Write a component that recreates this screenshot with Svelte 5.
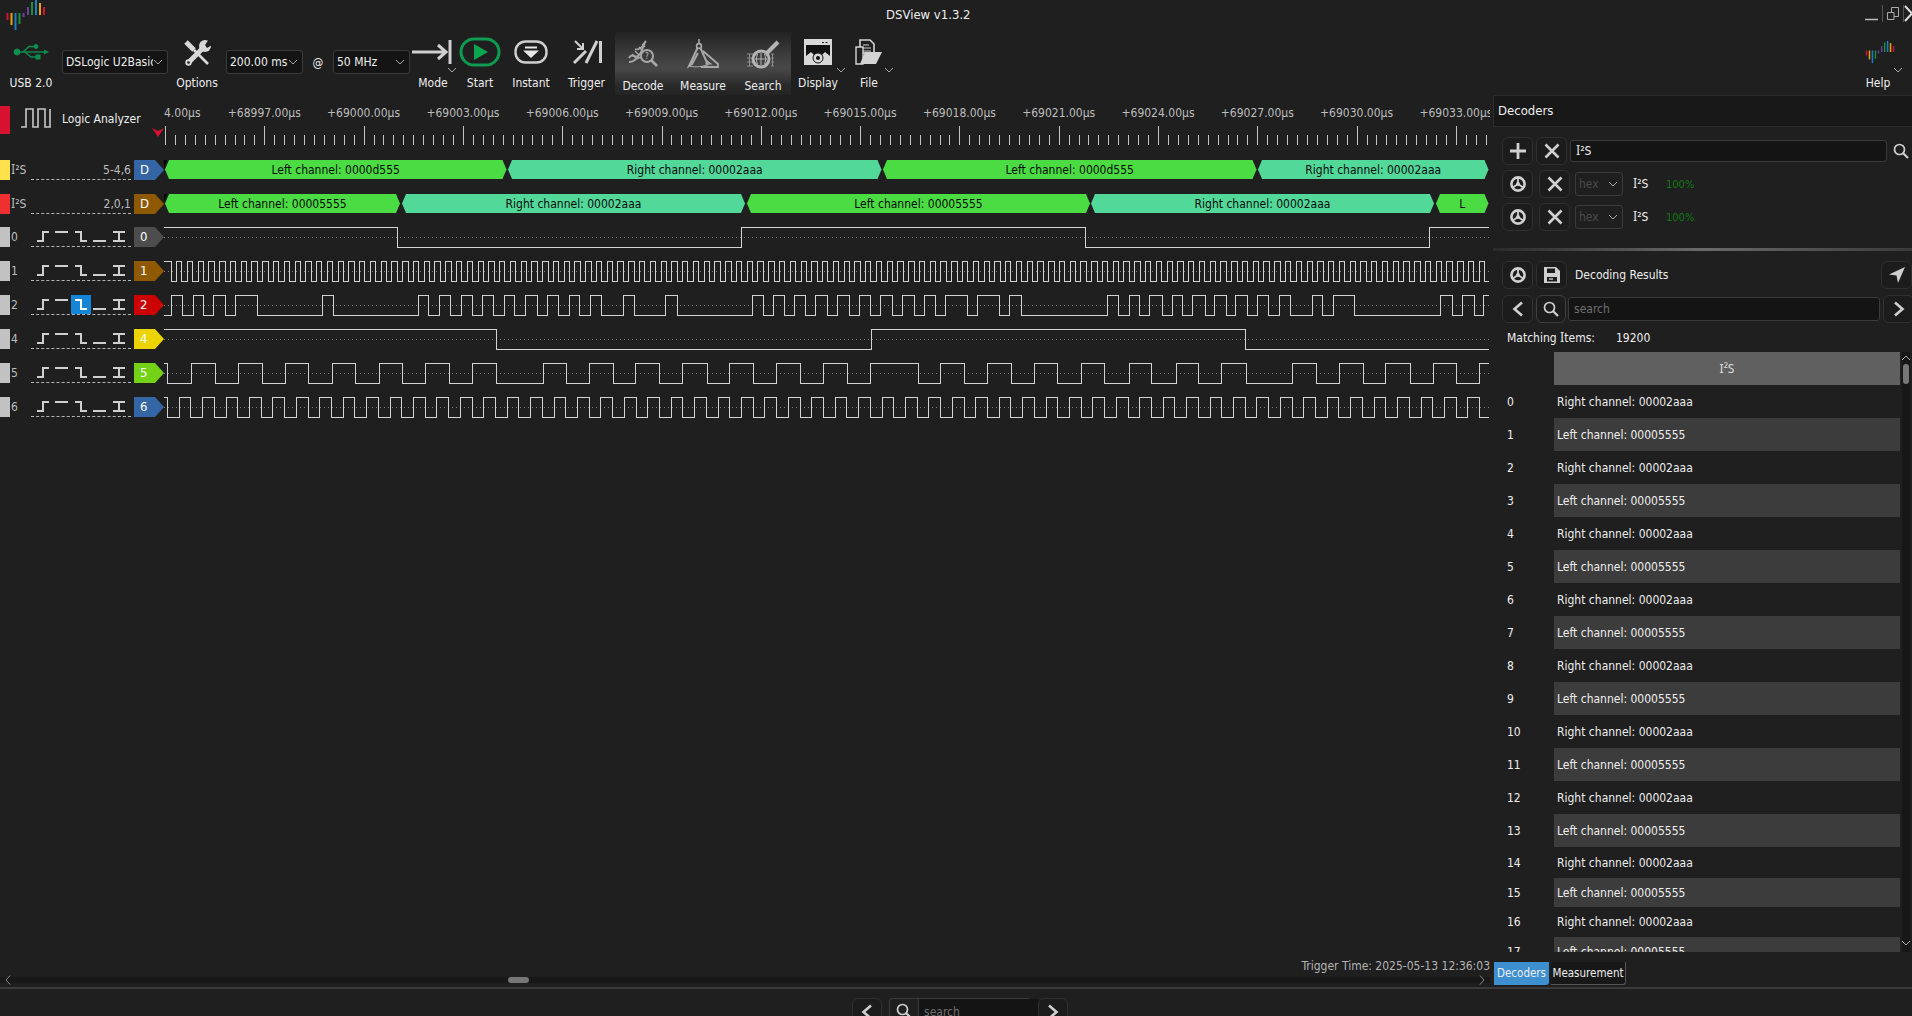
<script>
  const X0 = 164, X1 = 1489;

  // ruler
  const labels = [];
  for (let i = 1; i <= 13; i++) labels.push({ x: 165 + i * 99.3, t: `+${68994 + i * 3}.00µs` });
  let majorTicks = "", minorTicks = "";
  for (let i = 0; i <= 13; i++) {
    const mx = Math.round(165 + i * 99.3) + 0.5;
    majorTicks += `M${mx} 126V145`;
    for (let j = 1; j < 10; j++) {
      const x = Math.round(165 + i * 99.3 + j * 9.93) + 0.5;
      if (x < X1) minorTicks += `M${x} 135V145`;
    }
  }

  // decoder bars
  const decoded = [
    { y: 160, segs: [[165, 506.5, "L", "Left channel: 0000d555"], [508, 881.5, "R", "Right channel: 00002aaa"], [883, 1256.5, "L", "Left channel: 0000d555"], [1258, 1488.5, "R", "Right channel: 00002aaa"]] },
    { y: 194, segs: [[165, 400, "L", "Left channel: 00005555"], [402, 745, "R", "Right channel: 00002aaa"], [747, 1090, "L", "Left channel: 00005555"], [1091, 1434, "R", "Right channel: 00002aaa"], [1436, 1488.5, "L", "L"]] },
  ];
  function barPoints(a, b, y) {
    const h = 19, m = y + h / 2;
    return `${a},${m} ${a + 4},${y} ${b - 4},${y} ${b},${m} ${b - 4},${y + h} ${a + 4},${y + h}`;
  }

  // waveforms, x of every transition
  function series(start, step, end) {
    const out = [];
    for (let x = start; x < end; x += step) out.push(x);
    return out;
  }
  const waves = [
    { high: true, edges: [397, 741, 1085, 1429] },
    { high: true, edges: series(170.7, 5.383, X1) },
    { high: false, edges: [171, 182, 193, 203, 213, 225, 235, 257, 322, 333, 418, 428, 439, 450, 461, 472, 482, 493, 504, 514, 525, 537, 547, 558, 569, 579, 590, 601, 623, 634, 665, 677, 752, 763, 773, 784, 794, 805, 815, 827, 837, 849, 859, 870, 880, 892, 902, 914, 924, 935, 945, 967, 977, 999, 1009, 1021, 1107, 1118, 1129, 1139, 1149, 1162, 1172, 1182, 1192, 1205, 1214, 1226, 1235, 1247, 1257, 1268, 1279, 1290, 1312, 1322, 1333, 1354, 1440, 1452, 1462, 1474, 1483] },
    { high: true, edges: [496, 871, 1245] },
    { high: true, edges: [167, 191, 215, 238, 262, 285, 308, 332, 355, 379, 402, 425, 449, 472, 496, 543, 566, 589, 613, 635, 659, 682, 707, 729, 753, 776, 800, 823, 847, 870, 918, 940, 964, 987, 1011, 1034, 1057, 1081, 1104, 1129, 1151, 1176, 1198, 1221, 1246, 1292, 1316, 1339, 1363, 1385, 1410, 1433, 1456, 1479] },
    { high: true, edges: series(167, 11.715, X1) },
  ];
  function wavePath(w, i) {
    const top = 227.5 + i * 34, low = top + 20;
    let level = w.high;
    let d = `M${X0} ${level ? top : low}`;
    for (const e of w.edges) {
      level = !level;
      d += `H${Math.round(e) + 0.5}V${level ? top : low}`;
    }
    return d + `H${X1}`;
  }

  const channels = [
    { id: "0", tag: "#4d4d4d" },
    { id: "1", tag: "#8f5902" },
    { id: "2", tag: "#cc0000", sel: true },
    { id: "4", tag: "#edd400" },
    { id: "5", tag: "#73d216" },
    { id: "6", tag: "#3465a4" },
  ];
  const triggers = ["M1 10H7V1H13", "M0 1H13", "M1 1H7V10H13", "M0 10H13", "M1 1H13M1 10H13M7 1V10"];

  const results = [];
  const rowHeights = [33, 33, 33, 33, 33, 33, 33, 33, 33, 33, 33, 33, 33, 33, 31, 29, 30, 30];
  rowHeights.forEach((h, i) => results.push({ i, h, text: i % 2 ? "Left channel: 00005555" : "Right channel: 00002aaa" }));
</script>

{#snippet logo(w, h)}
  <svg class="logo" width={w} height={h} viewBox="0 0 46 30">
    <path d="M7.5 13v7" stroke="#d7112f" />
    <path d="M11.5 13v12" stroke="#e8a317" />
    <path d="M15.5 13v17" stroke="#1c7fc4" />
    <path d="M19.5 13v11" stroke="#1f8f3a" />
    <path d="M23.5 13v4" stroke="#6a3fa0" />
    <path d="M28 7v8" stroke="#6a3fa0" />
    <path d="M32 2v13" stroke="#1f8f3a" />
    <path d="M36 0v15" stroke="#1c7fc4" />
    <path d="M40 3v12" stroke="#e8a317" />
    <path d="M44 7v8" stroke="#d7112f" />
  </svg>
{/snippet}

{#snippet chev(dir)}
  <svg class="chev" width="10" height="6" viewBox="0 0 10 6"><path d={dir === "up" ? "M1 5L5 1L9 5" : "M1 1L5 5L9 1"} /></svg>
{/snippet}

{#snippet combo(text, width)}
  <div class="combo" style="width:{width}px"><span>{text}</span>{@render chev("down")}</div>
{/snippet}

{#snippet wheel()}
  <svg width="18" height="18" viewBox="0 0 18 18" class="glyph">
    <circle cx="9" cy="9" r="6.6" fill="none" stroke-width="2.6" />
    <circle cx="9" cy="9" r="2" class="solid" />
    <path d="M9 9V3M9 9L3.8 12.4M9 9L14.2 12.4" stroke-width="1.8" />
  </svg>
{/snippet}

{#snippet cross()}
  <svg width="16" height="16" viewBox="0 0 16 16" class="glyph"><path d="M1.5 1.5L14.5 14.5M14.5 1.5L1.5 14.5" stroke-width="2.6" /></svg>
{/snippet}

{#snippet lens(size)}
  <svg width={size} height={size} viewBox="0 0 16 16" class="glyph"><circle cx="6.5" cy="6.5" r="5" fill="none" stroke-width="1.7" /><path d="M10 10L15 15" stroke-width="2.2" /></svg>
{/snippet}

{#snippet arrow(dir)}
  <svg width="12" height="16" viewBox="0 0 12 16" class="glyph"><path d={dir === "left" ? "M10 1.5L2.5 8L10 14.5" : "M2 1.5L9.5 8L2 14.5"} stroke-width="2.6" /></svg>
{/snippet}

{#snippet i2s()}<span class="serif-i">I</span>²S{/snippet}

<div class="app">
  <header class="title">
    {@render logo(46, 30)}
    <span class="title-text">DSView v1.3.2</span>
    <div class="winctl">
      <svg width="47" height="22" viewBox="0 0 47 22">
        <path d="M0 14.5H13" stroke="#bbb" stroke-width="1.5" />
        <path d="M17.5 0V17M38.5 0V17" stroke="#555" />
        <path d="M26.5 7.5V2.5H33.5V11.5H29M22.5 7.5H29V14.5H22.5Z" stroke="#aaa" fill="none" />
        <path d="M40 1L47 8.5L40 16" stroke="#ddd" stroke-width="2" fill="none" />
      </svg>
    </div>
  </header>

  <section class="toolbar">
    <div class="tool w62">
      <div class="ic">
        <svg width="36" height="16" viewBox="0 0 36 16">
          <g fill="#0d8f4c" stroke="#0d8f4c">
            <circle cx="4" cy="8" r="3" />
            <path d="M4 8H31" stroke-width="1.4" />
            <path d="M36 8L31 5.5V10.5Z" stroke="none" />
            <path d="M10 8L16 2.5H21M12 8L18 13H23" fill="none" stroke-width="1.4" />
            <circle cx="23" cy="2.5" r="2" />
            <rect x="23" y="11" width="4" height="4" />
          </g>
        </svg>
      </div>
      <span>USB 2.0</span>
    </div>
    <div class="combo-slot">{@render combo("DSLogic U2Basic", 106)}</div>
    <div class="tool w58">
      <div class="ic">
        <svg width="32" height="32" viewBox="0 0 32 32">
          <path d="M5 6L13 14" stroke="#d8d8d8" stroke-width="5" />
          <path d="M13 14L27 28" stroke="#d8d8d8" stroke-width="2.6" />
          <path d="M22 12L8 26" stroke="#d8d8d8" stroke-width="5" />
          <circle cx="24" cy="10" r="6" fill="#d8d8d8" />
          <path d="M24 9L28 3L33 8L26 12Z" fill="#1f1f1f" />
          <circle cx="7.5" cy="26.5" r="3.2" fill="#d8d8d8" />
          <circle cx="7.5" cy="26.5" r="1.3" fill="#1f1f1f" />
        </svg>
      </div>
      <span>Options</span>
    </div>
    <div class="combo-slot">{@render combo("200.00 ms", 77)}</div>
    <div class="at">@</div>
    <div class="combo-slot">{@render combo("50 MHz", 77)}</div>
    <div class="tool w46">
      <div class="ic">
        <svg width="44" height="26" viewBox="0 0 44 26">
          <path d="M1 13H35M27 6L35 13L27 20" stroke="#d0d0d0" stroke-width="3" fill="none" />
          <path d="M39 1V25" stroke="#d0d0d0" stroke-width="3" />
        </svg>
      </div>
      <span>Mode</span>
      <i class="drop">{@render chev("down")}</i>
    </div>
    <div class="tool w48">
      <div class="ic">
        <svg width="42" height="30" viewBox="0 0 42 30">
          <rect x="2" y="2" width="38" height="26" rx="13" fill="none" stroke="#0c9c4f" stroke-width="3" />
          <path d="M15 7L29 15L15 23Z" fill="#0ca54f" />
        </svg>
      </div>
      <span>Start</span>
    </div>
    <div class="tool w54">
      <div class="ic">
        <svg width="34" height="24" viewBox="0 0 34 24">
          <rect x="1.5" y="1.5" width="31" height="21" rx="10" fill="none" stroke="#cfcfcf" stroke-width="2.4" />
          <path d="M11 7.5H23" stroke="#e8e8e8" stroke-width="2" />
          <path d="M9 10.5H25L17 18Z" fill="#e8e8e8" />
        </svg>
      </div>
      <span>Instant</span>
    </div>
    <div class="tool w57">
      <div class="ic">
        <svg width="30" height="26" viewBox="0 0 30 26">
          <path d="M2 24L14 12M14 24L25 2" stroke="#d0d0d0" stroke-width="3" />
          <path d="M28.5 2V24" stroke="#d0d0d0" stroke-width="3" />
          <path d="M3 2L11 10M5 10H11V4" stroke="#d0d0d0" stroke-width="2" fill="none" />
        </svg>
      </div>
      <span>Trigger</span>
    </div>

    <div class="tool-group">
      <div class="tool w56">
        <div class="ic">
          <svg width="32" height="30" viewBox="0 0 32 30">
            <g stroke="#a8a8a8" fill="none">
              <path d="M2 19C6 12 8 22 13 15S14 7 19 2" stroke-width="2" />
              <path d="M2 23C8 24 10 16 14 19" stroke-width="2" />
              <path d="M8 10C12 12 14 8 18 5M5 15L9 19M8 12L12 16M12 8L15 11M15 5L18 8" stroke-width="1.4" />
              <circle cx="20" cy="17" r="6" stroke-width="2" fill="#3a3a3a" />
              <path d="M24.5 21.5L30 27" stroke-width="2.6" />
            </g>
            <text x="20" y="20" class="q">?</text>
          </svg>
        </div>
        <span>Decode</span>
      </div>
      <div class="tool w64">
        <div class="ic">
          <svg width="32" height="30" viewBox="0 0 32 30">
            <g stroke="#a8a8a8" fill="none">
              <path d="M12 0V5" stroke-width="1.6" />
              <circle cx="12" cy="7" r="2.4" stroke-width="1.6" />
              <path d="M10.5 9L2 27L5 25L11 14M13.5 9L21 26" stroke-width="2" />
              <path d="M16 12L31 25V28H14" stroke-width="1.8" />
              <path d="M20 22L24 25H19Z" stroke-width="1.2" />
              <path d="M2 27C10 29 16 27 21 26" stroke-width="1" />
            </g>
          </svg>
        </div>
        <span>Measure</span>
      </div>
      <div class="tool w56">
        <div class="ic">
          <svg width="34" height="30" viewBox="0 0 34 30">
            <g stroke="#8c8c8c" fill="none" stroke-width="1">
              <path d="M1 15H7M1 19H7M1 23H7M1 27H7M25 15H28M25 19H28M25 23H28M25 27H28M3.5 15V27M26.5 15V27" />
            </g>
            <g stroke="#b4b4b4" fill="none">
              <circle cx="15" cy="20" r="8" stroke-width="3" />
              <path d="M21 14L32 3" stroke-width="4" />
              <path d="M9 20H21M15 14V26M11.5 15C10 19 10 22 11.5 25M18.5 15C20 19 20 22 18.5 25" stroke-width="1" />
            </g>
          </svg>
        </div>
        <span>Search</span>
      </div>
    </div>

    <div class="tool w54">
      <div class="ic">
        <svg width="28" height="26" viewBox="0 0 28 26">
          <rect x="1" y="1" width="26" height="24" fill="#111" stroke="#d8d8d8" stroke-width="2" />
          <rect x="1" y="1" width="26" height="5" fill="#d8d8d8" />
          <path d="M18 3.5H20M21.5 3.5H23.5" stroke="#222" />
          <path d="M2 24V17L7 13L11 17H17L21 13L26 17V24Z" fill="#d8d8d8" />
          <circle cx="14" cy="19" r="5" fill="#d8d8d8" stroke="#111" />
          <circle cx="14" cy="19" r="2" fill="#111" />
        </svg>
      </div>
      <span>Display</span>
      <i class="drop">{@render chev("down")}</i>
    </div>
    <div class="tool w48">
      <div class="ic">
        <svg width="28" height="26" viewBox="0 0 28 26">
          <path d="M5 1H15L19 5V14H5Z" fill="#1f1f1f" stroke="#d4d4d4" stroke-width="1.6" />
          <path d="M8 6H14M8 9H16M8 12H16" stroke="#d4d4d4" />
          <path d="M1 8V25H8V8Z" fill="#1f1f1f" stroke="#d4d4d4" stroke-width="1.4" />
          <path d="M5 25L10 13H27L21 25Z" fill="#d4d4d4" />
        </svg>
      </div>
      <span>File</span>
      <i class="drop">{@render chev("down")}</i>
    </div>

    <div class="spacer"></div>

    <div class="tool w68">
      <div class="ic">{@render logo(34, 24)}</div>
      <span>Help</span>
      <i class="drop help">{@render chev("down")}</i>
    </div>
  </section>

  <main class="main">
    <div class="left">
      <div class="workspace">
        <div class="headers">
          <div class="la-head">
            <div class="la-mark"></div>
            <svg class="la-wave" width="33" height="20" viewBox="0 0 33 20">
              <path d="M0 19H5V1H12V19H17V1H24V19H29V1" fill="none" stroke="#c8c8c8" stroke-width="1.6" transform="translate(1 0)" />
            </svg>
            <span>Logic Analyzer</span>
            <svg class="cursor" width="12" height="9" viewBox="0 0 12 9"><path d="M0 0L6 3L12 0L6 9Z" fill="#d7112f" /></svg>
          </div>

          <div class="row dec">
            <div class="swatch" style="background:#ffe14d"></div>
            <div class="name">{@render i2s()}</div>
            <div class="info">5-4,6</div>
            <div class="tag" style="background:#3465a4">D</div>
          </div>
          <div class="row dec">
            <div class="swatch" style="background:#f03030"></div>
            <div class="name">{@render i2s()}</div>
            <div class="info">2,0,1</div>
            <div class="tag" style="background:#8f5902">D</div>
          </div>

          {#each channels as ch}
            <div class="row">
              <div class="swatch" style="background:#c2c2c2"></div>
              <div class="name">{ch.id}</div>
              <div class="info trig">
                {#each triggers as t, n}
                  <span class="trig-btn" class:on={ch.sel && n === 2}>
                    <svg width="14" height="11" viewBox="0 0 14 11"><path d={t} /></svg>
                  </span>
                {/each}
              </div>
              <div class="tag" style="background:{ch.tag}">{ch.id}</div>
            </div>
          {/each}
        </div>

        <div class="viewport">
          <svg width="1326" height="882" viewBox="164 95 1326 882">
            <text x="164" y="117" class="ruler-text" text-anchor="start">4.00µs</text>
            {#each labels as l}
              <text x={l.x} y="117" class="ruler-text" text-anchor="middle">{l.t}</text>
            {/each}
            <path d={majorTicks} class="tick" />
            <path d={minorTicks} class="tick" />

            {#each decoded as row}
              <path d="M164 {row.y}L167 {row.y}L164 {row.y + 8}Z" fill="#000" />
              {#each row.segs as s}
                <polygon points={barPoints(s[0], s[1], row.y)} fill={s[2] === "L" ? "#4bdc44" : "#52d899"} />
                <text x={(s[0] + s[1]) / 2} y={row.y + 14} class="bar-text" text-anchor="middle">{s[3]}</text>
              {/each}
            {/each}

            {#each waves as w, i}
              <path d="M164 {237.5 + i * 34}H{X1}" class="mid" />
              <path d={wavePath(w, i)} class="wave" />
            {/each}
          </svg>
          <div class="trigger-time">Trigger Time: 2025-05-13 12:36:03</div>
        </div>
      </div>
      <div class="hscroll">
        <svg class="sb-arrow" width="6" height="10" viewBox="0 0 6 10"><path d="M5 0.5L1 5L5 9.5" /></svg>
        <div class="hthumb"></div>
        <svg class="sb-arrow end" width="6" height="10" viewBox="0 0 6 10"><path d="M1 0.5L5 5L1 9.5" /></svg>
      </div>
    </div>

    <aside class="dock">
      <div class="dock-title">Decoders</div>

      <div class="line first">
        <button class="ibtn">
          <svg width="16" height="16" viewBox="0 0 16 16" class="glyph"><path d="M8 0V16M0 8H16" stroke-width="2.8" /></svg>
        </button>
        <button class="ibtn">{@render cross()}</button>
        <div class="field wide"><span class="txt">{@render i2s()}</span></div>
        <span class="lens-side">{@render lens(16)}</span>
      </div>

      {#each [0, 1] as _}
        <div class="line dec-line">
          <button class="ibtn">{@render wheel()}</button>
          <button class="ibtn">{@render cross()}</button>
          <div class="combo hex"><span>hex</span>{@render chev("down")}</div>
          <span class="dec-name">{@render i2s()}</span>
          <span class="pct">100%</span>
        </div>
      {/each}

      <div class="sep"></div>

      <div class="line results">
        <button class="ibtn">{@render wheel()}</button>
        <button class="ibtn">
          <svg width="16" height="16" viewBox="0 0 16 16"><path fill-rule="evenodd" fill="#cfcfcf" d="M0 0H12L16 4V16H0ZM3 1.5V6H11V1.5ZM3 10V14.5H13V10Z" /><path d="M5 12H9" stroke="#cfcfcf" stroke-width="1.4" /></svg>
        </button>
        <span class="results-title">Decoding Results</span>
        <button class="ibtn nav">
          <svg width="16" height="16" viewBox="0 0 16 16"><path d="M16 0L0 7.5L7.5 8.5L9 16Z" fill="#cfcfcf" /></svg>
        </button>
      </div>

      <div class="line find">
        <button class="ibtn">{@render arrow("left")}</button>
        <button class="ibtn light">{@render lens(16)}</button>
        <input class="field grow" placeholder="search" />
        <button class="ibtn">{@render arrow("right")}</button>
      </div>

      <div class="matching"><span class="serif-wrap">Matching <span class="serif-i">I</span>tems:</span><span>19200</span></div>

      <div class="table-wrap">
        <div class="table">
          <div class="thead">I²S</div>
          {#each results as r}
            <div class="tr" style="height:{r.h}px">
              <span class="idx">{r.i}</span>
              <span class="cell" class:odd={r.i % 2 === 1}>{r.text}</span>
            </div>
          {/each}
        </div>
        <div class="vscroll">
          <span class="up">{@render chev("up")}</span>
          <div class="vthumb"></div>
          <span class="down">{@render chev("down")}</span>
        </div>
      </div>

      <div class="tabs">
        <div class="tab active">Decoders</div>
        <div class="tab">Measurement</div>
      </div>
    </aside>
  </main>

  <footer class="bottom">
    <button class="ibtn small">{@render arrow("left")}</button>
    <div class="bsearch">
      <span class="bs-icon">{@render lens(16)}</span>
      <input placeholder="search" />
    </div>
    <button class="ibtn small">{@render arrow("right")}</button>
  </footer>
</div>

<style>
  :global(body) {
    margin: 0;
    background: #1f1f1f;
    overflow: hidden;
  }
  .app {
    width: 1912px;
    height: 1016px;
    display: flex;
    flex-direction: column;
    overflow: hidden;
    background: #1f1f1f;
    color: #eeeeee;
    font-family: "DejaVu Sans Condensed", "DejaVu Sans", sans-serif;
    font-stretch: condensed;
    font-size: 12px;
  }
  .serif-i {
    font-family: "DejaVu Serif Condensed", "DejaVu Serif", serif;
  }

  /* title */
  .title {
    height: 30px;
    flex: none;
    display: flex;
    align-items: flex-start;
    position: relative;
  }
  .title-text {
    position: absolute;
    left: 886px;
    top: 7px;
    font-size: 13px;
  }
  .winctl {
    margin-left: auto;
    padding-top: 5px;
    line-height: 0;
  }
  .logo {
    display: block;
    stroke-width: 2;
    fill: none;
  }

  /* toolbar */
  .toolbar {
    height: 65px;
    flex: none;
    display: flex;
    align-items: flex-start;
  }
  .tool {
    position: relative;
    display: flex;
    flex-direction: column;
    align-items: center;
    flex: none;
  }
  .tool .ic {
    height: 44px;
    display: flex;
    align-items: center;
    justify-content: center;
  }
  .tool > span {
    line-height: 18px;
    color: #eeeeee;
  }
  .w46 { width: 46px; }
  .w48 { width: 48px; }
  .w54 { width: 54px; }
  .w56 { width: 56px; }
  .w57 { width: 57px; }
  .w58 { width: 58px; }
  .w62 { width: 62px; }
  .w64 { width: 64px; }
  .w68 { width: 68px; }
  .drop {
    position: absolute;
    right: -1px;
    top: 37px;
    line-height: 0;
  }
  .drop.help {
    right: 9px;
  }
  .chev {
    fill: none;
    stroke: #a8a8a8;
    stroke-width: 1;
    display: block;
  }
  .combo-slot {
    padding-top: 20px;
    flex: none;
  }
  .combo {
    height: 24px;
    box-sizing: border-box;
    display: flex;
    align-items: center;
    justify-content: space-between;
    background: #141414;
    border: 1px solid #3a3a3a;
    border-radius: 3px;
    padding: 0 4px 0 3px;
  }
  .combo span {
    overflow: hidden;
    white-space: nowrap;
    flex: 1;
  }
  .at {
    width: 30px;
    flex: none;
    padding-top: 26px;
    text-align: center;
  }
  .tool-group {
    display: flex;
    flex: none;
    height: 63px;
    margin-top: 2px;
    background: linear-gradient(#222222, #3c3c3c 35%, #484848 58%, #2a2a2a 85%, #232323);
  }
  .tool-group .tool .ic {
    height: 43px;
  }
  .tool-group .tool > span {
    padding-top: 2px;
  }
  .q {
    font-size: 8px;
    fill: #c8c8c8;
    text-anchor: middle;
  }
  .spacer {
    flex: 1;
  }

  /* main */
  .main {
    height: 892px;
    flex: none;
    display: flex;
  }
  .left {
    width: 1490px;
    flex: none;
    display: flex;
    flex-direction: column;
  }
  .workspace {
    height: 882px;
    flex: none;
    display: flex;
  }
  .headers {
    width: 164px;
    flex: none;
  }
  .la-head {
    position: relative;
    height: 58px;
    box-sizing: border-box;
    padding-top: 11px;
    display: flex;
    align-items: flex-start;
  }
  .la-mark {
    width: 10px;
    height: 28px;
    background: #d7112f;
    flex: none;
  }
  .la-wave {
    margin: 2px 9px 0 10px;
    flex: none;
  }
  .la-head span {
    line-height: 26px;
    white-space: nowrap;
  }
  .cursor {
    position: absolute;
    left: 152px;
    top: 33px;
  }
  .row {
    height: 34px;
    box-sizing: border-box;
    padding-top: 7px;
    display: flex;
    align-items: flex-start;
  }
  .row.dec + .row.dec {
    height: 33px;
  }
  .swatch {
    width: 10px;
    height: 20px;
    flex: none;
  }
  .name {
    width: 21px;
    padding-left: 1px;
    box-sizing: border-box;
    line-height: 20px;
    color: #bdbdbd;
    flex: none;
  }
  .info {
    width: 100px;
    height: 20px;
    box-sizing: border-box;
    border-bottom: 1px dashed #b4b4b4;
    text-align: right;
    line-height: 20px;
    color: #bdbdbd;
    flex: none;
  }
  .trig {
    display: flex;
    justify-content: space-between;
    padding: 0 3px;
    align-items: stretch;
  }
  .trig-btn {
    width: 20px;
    display: flex;
    align-items: center;
    justify-content: center;
    margin: 0 -0.5px;
    line-height: 0;
  }
  .trig-btn path {
    fill: none;
    stroke: #cfcfcf;
    stroke-width: 2;
  }
  .trig-btn.on {
    background: #1585d8;
  }
  .trig-btn.on path {
    stroke: #ffffff;
  }
  .tag {
    width: 30px;
    height: 20px;
    margin-left: 3px;
    box-sizing: border-box;
    padding-left: 6px;
    line-height: 20px;
    color: #ffffff;
    font-size: 13px;
    clip-path: polygon(0 0, 70% 0, 100% 50%, 70% 100%, 0 100%);
    flex: none;
  }
  .viewport {
    position: relative;
    width: 1326px;
    flex: none;
    line-height: 0;
  }
  .ruler-text {
    font-size: 12px;
    fill: #bdbdbd;
  }
  .tick {
    stroke: #c4c4c4;
    fill: none;
    shape-rendering: crispEdges;
  }
  .bar-text {
    font-size: 12px;
    fill: #0a0a0a;
  }
  .mid {
    stroke: #7c7c7c;
    stroke-dasharray: 1 3;
    fill: none;
    shape-rendering: crispEdges;
  }
  .wave {
    stroke: #d4d4d4;
    fill: none;
    shape-rendering: crispEdges;
  }
  .trigger-time {
    position: absolute;
    right: 0;
    bottom: 3px;
    line-height: 16px;
    color: #b4b4b4;
    white-space: nowrap;
  }
  .hscroll {
    position: relative;
    height: 6px;
    flex: none;
    background: #181818;
    display: flex;
    align-items: center;
    justify-content: space-between;
    padding: 0 5px;
    box-sizing: border-box;
  }
  .sb-arrow {
    fill: none;
    stroke: #8a8a8a;
    overflow: visible;
  }
  .sb-arrow.end {
    margin-right: 0;
  }
  .hthumb {
    position: absolute;
    left: 508px;
    top: 0;
    width: 21px;
    height: 6px;
    background: #777777;
    border-radius: 3px;
  }

  /* right dock */
  .dock {
    width: 419px;
    margin-left: 3px;
    flex: none;
    display: flex;
    flex-direction: column;
  }
  .dock-title {
    height: 32px;
    box-sizing: border-box;
    background: #181818;
    border: 1px solid #2c2c2c;
    border-right: none;
    padding-left: 4px;
    line-height: 29px;
    font-size: 13px;
    flex: none;
  }
  .line {
    height: 28px;
    padding-left: 9px;
    display: flex;
    align-items: center;
    flex: none;
  }
  .line.first {
    margin-top: 10px;
    gap: 3px;
  }
  .dec-line {
    margin-top: 5px;
  }
  .line.first + .dec-line {
    margin-top: 5px;
  }
  .ibtn {
    width: 31px;
    height: 28px;
    padding: 0;
    box-sizing: border-box;
    background: #1c1c1c;
    border: 1px solid #2f2f2f;
    border-radius: 6px;
    display: flex;
    align-items: center;
    justify-content: center;
    flex: none;
  }
  .ibtn.light {
    border-color: #3e3e3e;
    width: 30px;
  }
  .glyph {
    fill: none;
    stroke: #d0d0d0;
    display: block;
  }
  .glyph .solid {
    fill: #d0d0d0;
    stroke: none;
  }
  .field {
    height: 22px;
    box-sizing: border-box;
    background: #141414;
    border: 1px solid #3a3a3a;
    border-radius: 3px;
    padding: 0 5px;
    color: #eeeeee;
    font: inherit;
    font-stretch: condensed;
    outline: none;
    display: flex;
    align-items: center;
  }
  .field.wide {
    width: 317px;
    flex: none;
  }
  .field.grow {
    height: 24px;
    width: 311px;
    flex: none;
    margin: 0 2px;
  }
  .field::placeholder {
    color: #6f6f6f;
  }
  .lens-side {
    margin-left: 3px;
    line-height: 0;
  }
  .dec-line .ibtn + .ibtn {
    margin-left: 6px;
  }
  .combo.hex {
    width: 48px;
    margin-left: 5px;
    background: #1f1f1f;
    color: #4a4a4a;
    flex: none;
  }
  .dec-name {
    margin-left: 10px;
    width: 33px;
  }
  .pct {
    color: #0f7a0f;
    font-size: 11px;
  }
  .sep {
    height: 3px;
    margin-top: 17px;
    background: linear-gradient(90deg, #2a2a2a, #6a6a6a 50%, #3a3a3a);
    flex: none;
  }
  .line.results {
    margin-top: 10px;
    gap: 3px;
  }
  .results-title {
    margin-left: 5px;
  }
  .ibtn.nav {
    margin-left: auto;
  }
  .line.find {
    margin-top: 6px;
    gap: 3px;
  }
  .line.find .field.grow {
    margin: 0;
    width: 312px;
  }
  .line.find .ibtn.light {
    margin-right: -1px;
  }
  .matching {
    height: 29px;
    padding-left: 14px;
    display: flex;
    align-items: center;
    flex: none;
  }
  .serif-wrap {
    width: 109px;
  }
  .table-wrap {
    height: 600px;
    display: flex;
    overflow: hidden;
    flex: none;
  }
  .table {
    width: 407px;
    flex: none;
  }
  .thead {
    height: 33px;
    margin-left: 61px;
    background: #606060;
    display: flex;
    align-items: center;
    justify-content: center;
    font-family: "Noto Sans", sans-serif;
    font-stretch: normal;
    color: #dddddd;
  }
  .tr {
    display: flex;
    align-items: stretch;
  }
  .idx {
    width: 61px;
    padding-left: 14px;
    box-sizing: border-box;
    display: flex;
    align-items: center;
    flex: none;
  }
  .cell {
    flex: 1;
    padding-left: 3px;
    display: flex;
    align-items: center;
  }
  .cell.odd {
    background: #3c3c3c;
  }
  .vscroll {
    position: relative;
    width: 8px;
    margin-left: 2px;
    flex: none;
    background: #171717;
  }
  .vscroll .up {
    position: absolute;
    top: 3px;
    left: -1px;
  }
  .vscroll .down {
    position: absolute;
    bottom: 6px;
    left: -1px;
  }
  .vthumb {
    position: absolute;
    top: 12px;
    left: 1px;
    width: 6px;
    height: 20px;
    border-radius: 3px;
    background: #777777;
  }
  .tabs {
    margin-top: 10px;
    height: 23px;
    padding-left: 1px;
    display: flex;
    gap: 2px;
    flex: none;
  }
  .tab {
    width: 75px;
    box-sizing: border-box;
    border-right: 1px solid #555;
    border-bottom: 1px solid #555;
    border-bottom-right-radius: 3px;
    text-align: center;
    line-height: 22px;
    background: #181818;
    font-size: 11.5px;
  }
  .tab.active {
    width: 55px;
    background: #3d8fd0;
    border: none;
  }

  /* bottom */
  .bottom {
    flex: 1;
    border-top: 2px solid #3a3a3a;
    padding: 9px 0 0 8px;
    display: flex;
    justify-content: center;
    align-items: flex-start;
    gap: 7px;
    overflow: hidden;
  }
  .ibtn.small {
    width: 30px;
  }
  .bsearch {
    width: 142px;
    height: 28px;
    box-sizing: border-box;
    border: 1px solid #3a3a3a;
    border-radius: 3px;
    display: flex;
    flex: none;
  }
  .bs-icon {
    width: 29px;
    box-sizing: border-box;
    border-right: 1px solid #3a3a3a;
    display: flex;
    justify-content: center;
    padding-top: 4px;
    flex: none;
  }
  .bsearch input {
    width: 110px;
    background: #141414;
    border: none;
    outline: none;
    padding: 0 5px;
    font: inherit;
    font-stretch: condensed;
  }
  .bsearch input::placeholder {
    color: #6f6f6f;
  }
</style>
